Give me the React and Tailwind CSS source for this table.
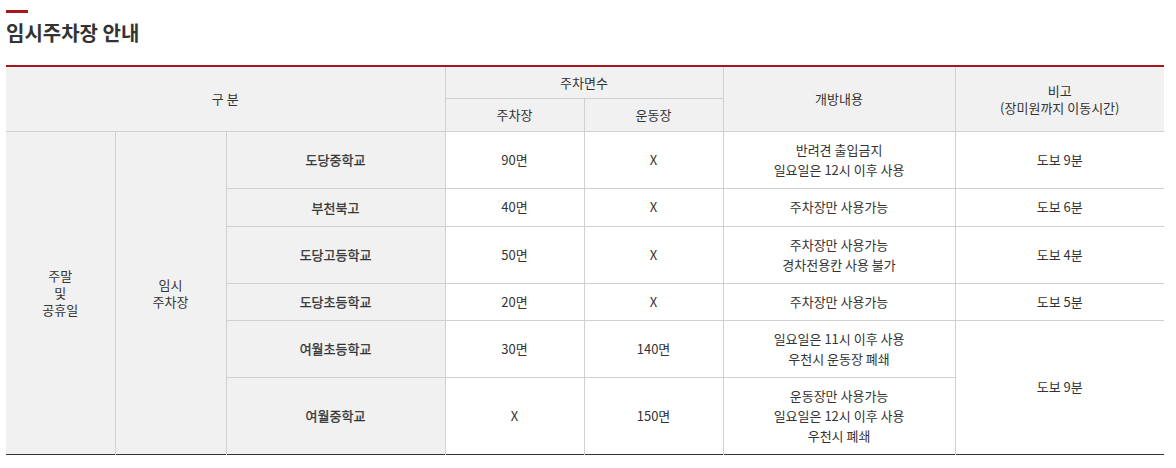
const rows = [
  { school: "도당중학교", lot: "90면", field: "X", open: ["반려견 출입금지", "일요일은 12시 이후 사용"], note: "도보 9분", h: "h-[57px]" },
  { school: "부천북고", lot: "40면", field: "X", open: ["주차장만 사용가능"], note: "도보 6분", h: "h-[38px]" },
  { school: "도당고등학교", lot: "50면", field: "X", open: ["주차장만 사용가능", "경차전용칸 사용 불가"], note: "도보 4분", h: "h-[56px]" },
  { school: "도당초등학교", lot: "20면", field: "X", open: ["주차장만 사용가능"], note: "도보 5분", h: "h-[37px]" },
  { school: "여월초등학교", lot: "30면", field: "140면", open: ["일요일은 11시 이후 사용", "우천시 운동장 폐쇄"], note: "도보 9분", noteSpan: 2, h: "h-[57px]" },
  { school: "여월중학교", lot: "X", field: "150면", open: ["운동장만 사용가능", "일요일은 12시 이후 사용", "우천시 폐쇄"], h: "h-[77px]" },
];

const th = "bg-[#f1f1f1] border border-[#d0d0d0] font-normal text-center align-middle leading-[17px] px-2";
const td = "border border-[#d0d0d0] text-center align-middle leading-5 px-2 py-2";

export default function App() {
  return (
    <div className="w-[1176px] h-[468px] bg-white px-[6px] pt-[10px] text-[#333] font-['Noto_Sans_CJK_KR',sans-serif] overflow-hidden">
      <div className="w-[22px] h-[3px] bg-[#a8171c]" />
      <h2 className="mt-[7px] text-[20px] leading-[26px] font-bold text-[#333]">임시주차장 안내</h2>

      <table className="mt-[19px] w-[1158px] table-fixed border-collapse border-t-2 border-t-[#a8171c] border-b border-b-[#333] text-[13px]">
        <colgroup>
          <col className="w-[109px]" />
          <col className="w-[111px]" />
          <col className="w-[219px]" />
          <col className="w-[139px]" />
          <col className="w-[139px]" />
          <col className="w-[232px]" />
          <col className="w-[209px]" />
        </colgroup>
        <thead>
          <tr className="h-[32px]">
            <th colSpan={3} rowSpan={2} className={`${th} border-l-0 border-t-0`}>구 분</th>
            <th colSpan={2} className={`${th} border-t-0`}>주차면수</th>
            <th rowSpan={2} className={`${th} border-t-0`}>개방내용</th>
            <th rowSpan={2} className={`${th} border-r-0 border-t-0`}>
              비고
              <br />
              (장미원까지 이동시간)
            </th>
          </tr>
          <tr className="h-[33px]">
            <th className={th}>주차장</th>
            <th className={th}>운동장</th>
          </tr>
        </thead>
        <tbody>
          {rows.map((r, i) => (
            <tr key={r.school} className={r.h}>
              {i === 0 && (
                <>
                  <th rowSpan={6} className={`${th} border-l-0 border-b-0`}>
                    주말
                    <br />
                    및
                    <br />
                    공휴일
                  </th>
                  <th rowSpan={6} className={`${th} border-b-0`}>
                    임시
                    <br />
                    주차장
                  </th>
                </>
              )}
              <th className={`${th} [-webkit-text-stroke:0.3px_#333] ${i === 5 ? "border-b-0" : ""}`}>{r.school}</th>
              <td className={`${td} ${i === 5 ? "border-b-0" : ""}`}>{r.lot}</td>
              <td className={`${td} ${i === 5 ? "border-b-0" : ""}`}>{r.field}</td>
              <td className={`${td} ${i === 5 ? "border-b-0" : ""}`}>
                {r.open.map((line, k) => (
                  <div key={k}>{line}</div>
                ))}
              </td>
              {r.note && (
                <td rowSpan={r.noteSpan || 1} className={`${td} border-r-0 ${r.noteSpan ? "border-b-0" : ""}`}>
                  {r.note}
                </td>
              )}
            </tr>
          ))}
        </tbody>
      </table>
    </div>
  );
}
